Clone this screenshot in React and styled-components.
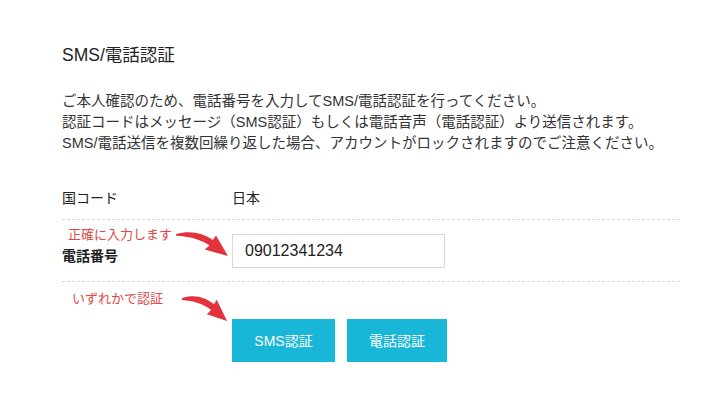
import styled, { createGlobalStyle } from "styled-components";

const GlobalStyle = createGlobalStyle`
  html, body {
    margin: 0;
    padding: 0;
    background: #fff;
  }
  body {
    font-family: "Liberation Sans", "Noto Sans CJK JP", sans-serif;
    color: #222;
  }
`;

const Page = styled.div`
  width: 720px;
  height: 405px;
  box-sizing: border-box;
  padding: 43px 40px 0 62px;
  overflow: hidden;
`;

const Title = styled.h2`
  margin: 0;
  font-size: 17.5px;
  line-height: 24px;
  font-weight: 400;
  color: #222;
`;

const Description = styled.p`
  margin: 24px 0 0;
  font-size: 14.5px;
  line-height: 21px;
  color: #333;
`;

const Form = styled.div`
  margin-top: 20px;
  width: 618px;
`;

const Row = styled.div`
  position: relative;
  display: grid;
  grid-template-columns: 170px 1fr;
  align-items: center;
  height: ${(p) => p.h}px;
  box-sizing: border-box;
  padding-top: ${(p) => p.pt || 0}px;
  border-bottom: ${(p) => (p.last ? "none" : "1px dashed #d9d9d9")};
  font-size: 14px;
`;

const Label = styled.div`
  font-weight: ${(p) => (p.bold ? 700 : 400)};
  padding-top: ${(p) => p.offset || 0}px;
  color: #222;
`;

const Value = styled.div`
  color: #222;
`;

const Input = styled.input`
  width: 213px;
  height: 34px;
  box-sizing: border-box;
  border: 1px solid #d8d8d8;
  padding: 0 12px;
  font-family: "Liberation Sans", "Noto Sans CJK JP", sans-serif;
  font-size: 16px;
  color: #222;
  outline: none;
`;

const Buttons = styled.div`
  display: flex;
  gap: 12px;
`;

const Button = styled.button`
  width: ${(p) => p.w}px;
  height: 43px;
  border: none;
  background: #19b7d7;
  color: #fff;
  font-family: "Liberation Sans", "Noto Sans CJK JP", sans-serif;
  font-size: 14px;
`;

const Note = styled.span`
  position: absolute;
  left: ${(p) => p.x}px;
  top: ${(p) => p.y}px;
  font-size: 13px;
  line-height: 16px;
  color: #e04848;
  white-space: nowrap;
`;

const ArrowBox = styled.svg`
  position: absolute;
  left: ${(p) => p.x}px;
  top: ${(p) => p.y}px;
`;

function Arrow({ x, y, w = 52, h = 28 }) {
  return (
    <ArrowBox x={x} y={y} width={w} height={h} viewBox="0 0 50 28" preserveAspectRatio="none">
      <path
        d="M1 4 C14 0, 26 3, 35 10 L38 5.5 L49 26 L27.5 19.5 L32 15.5 C24 9.5, 13 6.5, 1 5.8 Z"
        fill="#e3323c"
      />
    </ArrowBox>
  );
}

export default function App() {
  return (
    <>
      <GlobalStyle />
      <Page>
        <Title>SMS/電話認証</Title>
        <Description>
          ご本人確認のため、電話番号を入力してSMS/電話認証を行ってください。
          <br />
          認証コードはメッセージ（SMS認証）もしくは電話音声（電話認証）より送信されます。
          <br />
          SMS/電話送信を複数回繰り返した場合、アカウントがロックされますのでご注意ください。
        </Description>
        <Form>
          <Row h={46}>
            <Label>国コード</Label>
            <Value>日本</Value>
          </Row>
          <Row h={62}>
            <Note x={6} y={7}>正確に入力します</Note>
            <Arrow x={113} y={10} w={54} h={28} />
            <Label bold offset={8}>電話番号</Label>
            <Input defaultValue="09012341234" />
          </Row>
          <Row h={80} pt={36} last>
            <Note x={10} y={9}>いずれかで認証</Note>
            <Arrow x={119} y={12} w={47} h={29} />
            <span />
            <Buttons>
              <Button w={103}>SMS認証</Button>
              <Button w={100}>電話認証</Button>
            </Buttons>
          </Row>
        </Form>
      </Page>
    </>
  );
}
